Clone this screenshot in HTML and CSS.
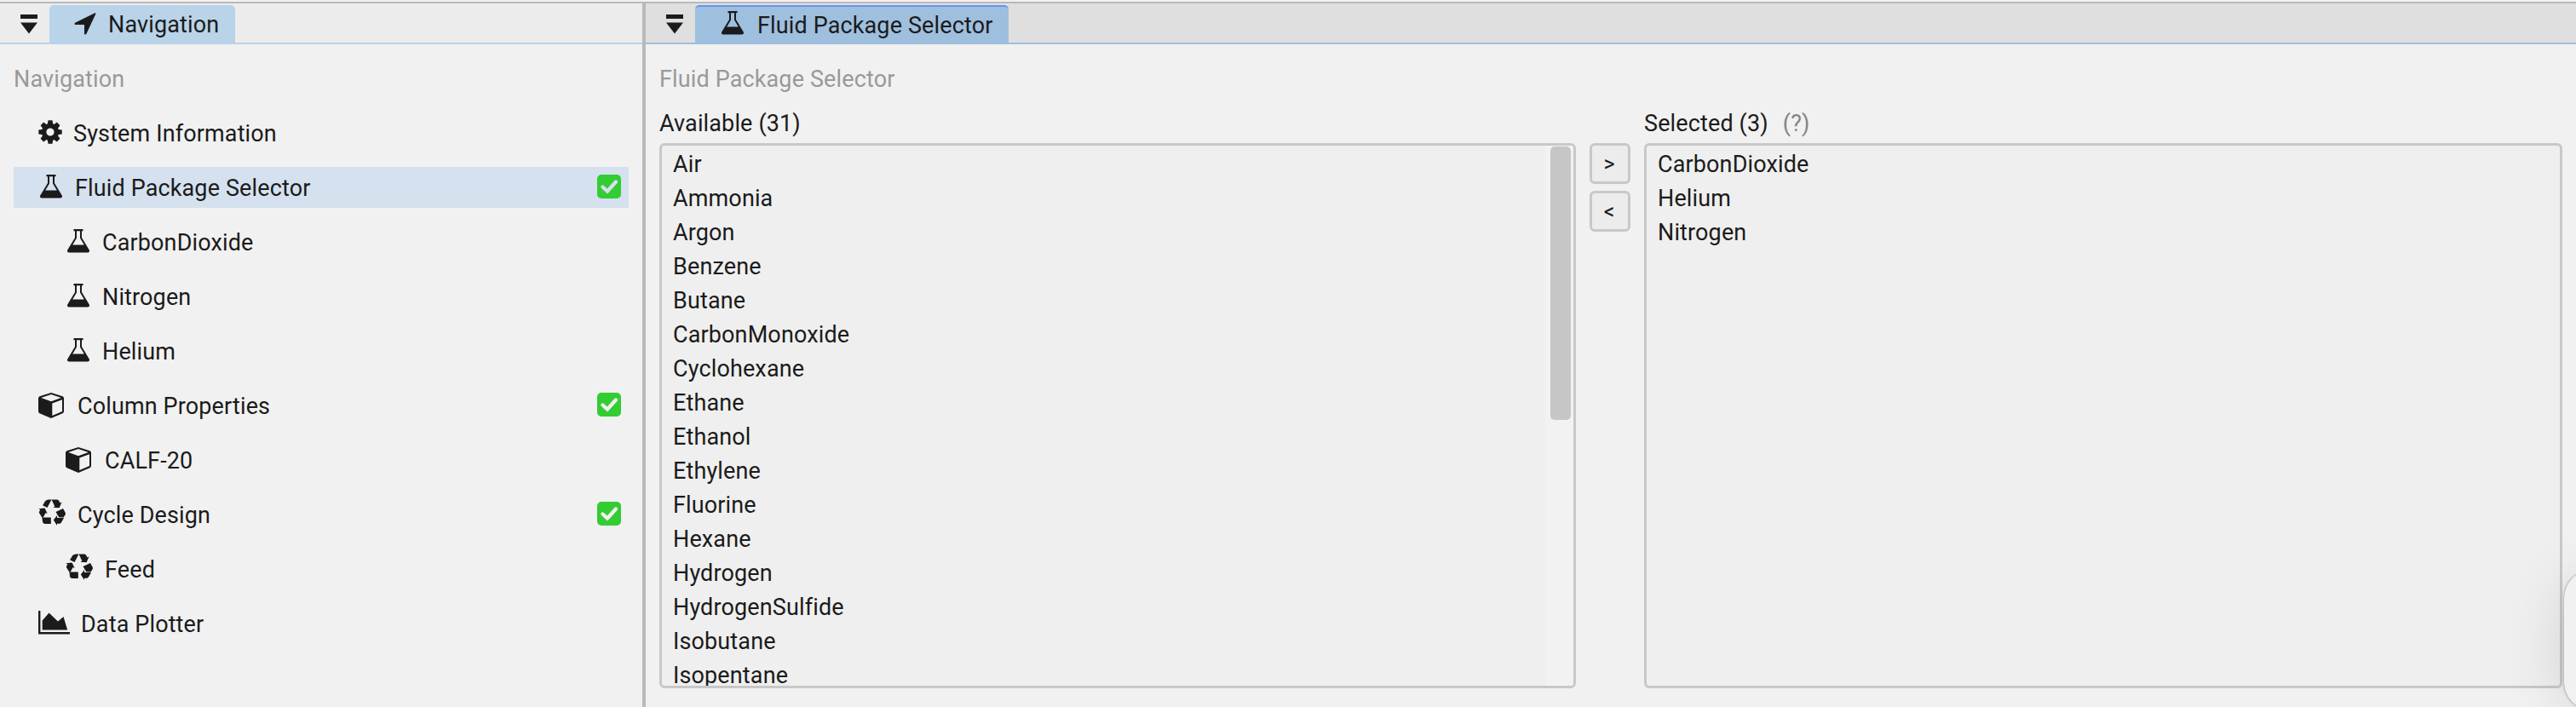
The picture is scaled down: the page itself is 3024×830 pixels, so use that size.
FILE: index.html
```html
<!DOCTYPE html>
<html lang="en">
<head>
  <meta charset="UTF-8">
  <meta name="viewport" content="width=device-width, initial-scale=1.0">
  <title>Fluid Package Selector</title>
  <link rel="stylesheet" href="styles.css">
</head>
<body>

<!-- icon shapes -->
<svg class="sprite" width="0" height="0">
  <symbol id="gear" viewBox="0 0 28 28">
    <path fill-rule="evenodd" d="M11.5 0.3h5l.6 4 1.400.6 3.300-2.300 3.600 3.600-2.300 3.300.6 1.400 4 .6v5l-4 .6-.6 1.400 2.300 3.300-3.600 3.600-3.300-2.300-1.400.6-.6 4h-5l-.6-4-1.400-.6-3.300 2.300-3.600-3.600 2.300-3.300-.6-1.400-4-.6v-5l4-.6.6-1.400-2.300-3.300 3.600-3.600 3.300 2.300 1.400-.6zM14 9.400a4.600 4.600 0 1 0 0 9.200a4.600 4.600 0 1 0 0-9.200z"/>
  </symbol>
  <symbol id="flask" viewBox="0 0 26 28">
    <path fill-rule="evenodd" d="M7.500 0h11v2.200h-1.500v7.800l8.600 14.300c1 1.700.2 3.200-1.600 3.200H2c-1.800 0-2.600-1.500-1.600-3.200L9 10V2.200H7.500zM11 2.200v8.400L6.200 18.600h13.600L15 10.600V2.200z"/>
  </symbol>
  <symbol id="cube" viewBox="0 0 30 30">
    <path fill-rule="evenodd" d="M15 0l13.500 4.300Q30 5 30 6.500V22q0 1.500-1.500 2.200L15 30 1.500 24.200Q0 23.500 0 22V6.500Q0 5 1.500 4.300zM15 2L3.200 6 15 10.200 26.800 6zM28 8.200L16.300 12.500v14.600L28 22z"/>
  </symbol>
  <symbol id="recycle" viewBox="0 0 32 31">
    <path d="M11.500 0.500h4L10.500 10 5 7.200 8.500 1.800z"/>
    <path d="M15.500 .5h6.500c1.500 0 2 1 2.600 2.200l1 1.800 2-1.200-3 7-7.300-.6 2-1.200z"/>
    <path d="M.3 11.200l7.200-.6 3.200 6.400-2-1L5 22.500 1.200 16.500c-.5-1-.4-1.600.2-2.600l1-1.500z"/>
    <path d="M4.500 21.500h10.300V29H8c-1.500 0-2.400-1-3-2.300z"/>
    <path d="M29 11l2.500 4.500c.7 1.200.5 2 0 3L29.500 21.500l-5.300-.3-3.700-6.200z"/>
    <path d="M22 22h8l-2.500 4.500c-.8 1.500-1.700 2.300-3.200 2.300h-2.300V31l-4.200-6.500 4.200-5.500z"/>
  </symbol>
  <symbol id="chart" viewBox="0 0 37 28">
    <path d="M0 0h2.400v25h34.600v2.600H0zM4.700 11.500L12.500 2.500l10.500 10 6.500-5.500 4.700 15.500H4.700z"/>
  </symbol>
  <symbol id="arrow" viewBox="0 0 26 26">
    <path d="M24.500 .3q1.200 0 .8 1.200L14.500 24.500q-.5 1-1.500 1t-1-1V14H1.500Q.5 14 .5 13t1-1.500z"/>
  </symbol>
  <symbol id="menu" viewBox="0 0 20 23">
    <path d="M0 0h20v5H0zM0 9.500h20L10 22.500z"/>
  </symbol>
  <symbol id="check" viewBox="0 0 28 28">
    <rect width="28" height="28" rx="5" fill="#33cc33"/>
    <path d="M6.500 14.500l5.500 5L22 8.500" fill="none" stroke="currentColor" stroke-width="4.300" stroke-linecap="round"/>
  </symbol>
</svg>

<div class="app">
  <section class="panel nav-panel">
    <div class="tab-bar">
      <svg class="menu"><use href="#menu"/></svg>
      <div class="tab"><svg class="arrow"><use href="#arrow"/></svg>Navigation</div>
    </div>
    <div class="panel-body">
      <h2>Navigation</h2>
      <ul class="tree">
        <li><svg class="gear"><use href="#gear"/></svg>System Information</li>
        <li class="active"><svg class="flask"><use href="#flask"/></svg>Fluid Package Selector<svg class="check"><use href="#check"/></svg></li>
        <li class="child"><svg class="flask"><use href="#flask"/></svg>CarbonDioxide</li>
        <li class="child"><svg class="flask"><use href="#flask"/></svg>Nitrogen</li>
        <li class="child"><svg class="flask"><use href="#flask"/></svg>Helium</li>
        <li><svg class="cube"><use href="#cube"/></svg>Column Properties<svg class="check"><use href="#check"/></svg></li>
        <li class="child"><svg class="cube"><use href="#cube"/></svg>CALF-20</li>
        <li><svg class="recycle"><use href="#recycle"/></svg>Cycle Design<svg class="check"><use href="#check"/></svg></li>
        <li class="child"><svg class="recycle"><use href="#recycle"/></svg>Feed</li>
        <li><svg class="chart"><use href="#chart"/></svg>Data Plotter</li>
      </ul>
    </div>
  </section>

  <section class="panel main-panel">
    <div class="tab-bar">
      <svg class="menu"><use href="#menu"/></svg>
      <div class="tab"><svg class="flask"><use href="#flask"/></svg>Fluid Package Selector</div>
    </div>
    <div class="panel-body">
      <h2>Fluid Package Selector</h2>
      <div class="selector">
        <div class="column available">
          <h3>Available (31)</h3>
          <div class="list">
            <ul>
              <li>Air</li>
              <li>Ammonia</li>
              <li>Argon</li>
              <li>Benzene</li>
              <li>Butane</li>
              <li>CarbonMonoxide</li>
              <li>Cyclohexane</li>
              <li>Ethane</li>
              <li>Ethanol</li>
              <li>Ethylene</li>
              <li>Fluorine</li>
              <li>Hexane</li>
              <li>Hydrogen</li>
              <li>HydrogenSulfide</li>
              <li>Isobutane</li>
              <li>Isopentane</li>
            </ul>
            <div class="scrollbar"><div class="thumb"></div></div>
          </div>
        </div>
        <div class="buttons">
          <button>&gt;</button>
          <button>&lt;</button>
        </div>
        <div class="column selected">
          <h3>Selected (3)<span class="help">(?)</span></h3>
          <div class="list">
            <ul>
              <li>CarbonDioxide</li>
              <li>Helium</li>
              <li>Nitrogen</li>
            </ul>
          </div>
        </div>
      </div>
    </div>
  </section>

  <div class="floating"></div>
</div>

</body>
</html>
```
FILE: styles.css
```css
* {
  box-sizing: border-box;
}
body {
  margin: 0;
  background-color: #f1f1f1;
  color: #1b1b1b;
  font-family: Roboto, sans-serif;
  font-size: 27px;
  letter-spacing: 0.13px;
}
svg {
  display: block;
  flex: none;
  fill: #1b1b1b;
}
.sprite {
  position: absolute;
}
h2,
h3 {
  margin: 0;
  font-size: inherit;
  font-weight: normal;
}
ul {
  list-style: none;
  margin: 0;
  padding: 0;
}
.app {
  display: flex;
  position: relative;
  height: 830px;
  padding-top: 2px;
  overflow: hidden;
}
.panel {
  border-top: 2px solid #b9b9b9;
}
.nav-panel {
  width: 758px;
  border-right: 4px solid #b9b9b9;
}
.main-panel {
  flex: 1;
}
/* Tabs */
.tab-bar {
  display: flex;
  height: 48px;
  padding-top: 2px;
  background-color: #ececec;
  border-bottom: 2px solid #b9d3e9;
}
.main-panel .tab-bar {
  background-color: #dfdfdf;
  border-color: #9ebfde;
}
.menu {
  width: 20px;
  height: 23px;
  margin: 11px 14px 0 24px;
}
.tab {
  display: flex;
  align-items: center;
  width: 218px;
  height: 44px;
  padding: 2px 0 0 29px;
  border-radius: 5px 5px 0 0;
  background-color: #b9d3e9;
}
.main-panel .tab {
  width: 368px;
  padding: 1px 0 0 31px;
  border-top: 2px solid #6495ed;
  background-color: #9ebfde;
}
.arrow {
  width: 26px;
  height: 26px;
  margin: 0 14px 3px 0;
}
.main-panel .flask {
  margin: 0 16px 5px 0;
}
.panel-body {
  padding: 21px 16px 0;
}
h2 {
  height: 40px;
  line-height: 40px;
  color: #999;
}
/* Navigation tree */
.tree {
  margin-top: 19px;
}
.tree li {
  display: flex;
  align-items: center;
  height: 48px;
  margin-bottom: 16px;
  padding: 2px 9px 0 29px;
}
.tree .child {
  padding-left: 61px;
}
.tree .active {
  background-color: #d5e1ee;
}
.gear {
  width: 28px;
  height: 28px;
  margin: 0 13px 4px 0;
}
.flask {
  width: 26px;
  height: 28px;
  margin: 0 15px 4px 2px;
}
.cube {
  width: 30px;
  height: 30px;
  margin: 0 16px 3px 0;
}
.recycle {
  width: 32px;
  height: 31px;
  margin: 0 14px 8px 0;
}
.chart {
  width: 37px;
  height: 28px;
  margin: 0 13px 4px 0;
}
.check {
  width: 28px;
  height: 28px;
  margin: 0 0 5px auto;
  color: #f1f1f1;
}
.active .check {
  color: #d5e1ee;
}
/* Fluid lists */
.selector {
  display: flex;
  gap: 16px;
}
.available {
  width: 1076px;
}
.selected {
  flex: 1;
}
h3 {
  height: 55px;
  padding-top: 12px;
  line-height: 40px;
}
.help {
  margin-left: 17px;
  color: #858585;
}
.list {
  display: flex;
  justify-content: space-between;
  height: 640px;
  overflow: hidden;
  border: 3px solid #c8c8c8;
  border-radius: 6px;
  background-color: #efefef;
}
.list ul {
  padding: 2px 0 0 13px;
}
.list li {
  height: 40px;
  line-height: 40px;
}
.scrollbar {
  width: 33px;
  padding: 1px 3px 0 6px;
  background-color: #f2f2f2;
}
.thumb {
  height: 321px;
  border-radius: 5px;
  background-color: #c6c6c6;
}
.buttons {
  display: flex;
  flex-direction: column;
  gap: 8px;
  padding-top: 55px;
}
button {
  width: 48px;
  height: 48px;
  padding: 0 2px 0 0;
  border: 3px solid #c8c8c8;
  border-radius: 6px;
  background-color: #ececec;
  color: #1b1b1b;
  font: inherit;
  font-size: 25px;
}
/* Overlay peeking in from the right edge */
.floating {
  position: absolute;
  top: 670px;
  right: -166px;
  width: 180px;
  height: 163px;
  border-radius: 32px;
  background-color: #f1f1f1;
  box-shadow: 0 0 3px rgba(0, 0, 0, 0.45), 0 8px 70px rgba(0, 0, 0, 0.12);
}
```
